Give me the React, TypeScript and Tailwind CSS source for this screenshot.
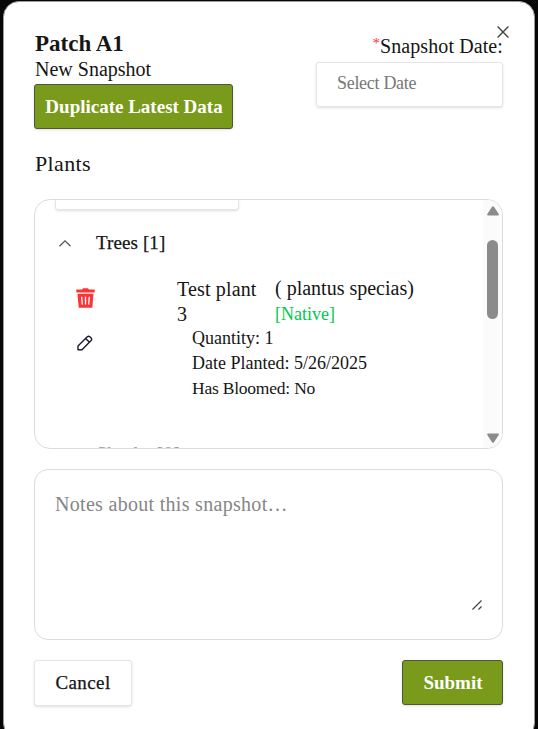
import React from "react";

function PrimaryButton({ children, className }: { children: React.ReactNode; className: string }) {
  return (
    <button
      className={`flex h-[45px] items-center justify-center rounded-[3px] border border-[#4d5540] bg-[#799a1a] pt-[2px] pl-px text-[19px] font-bold whitespace-nowrap text-white shadow-sm ${className}`}
    >
      {children}
    </button>
  );
}

function CloseIcon() {
  return (
    <svg width="12" height="12" viewBox="0 0 12 12" fill="none" stroke="#454545" strokeWidth="1.4">
      <path d="M.6.6l10.8 10.8M11.4.6L.6 11.4" />
    </svg>
  );
}

function TrashIcon() {
  return (
    <svg className="block" width="19" height="20" viewBox="0 0 19 20" fill="none">
      <path d="M.3 1.600H6L7.200.3h4.600L13 1.600h5.700V4.500H.3z" fill="#fb3535" />
      <path d="M1.500 5.700h16l-1.200 14H2.700z" fill="#fb3535" />
      <path d="M5.700 8.800l.6 7.800M9.500 8.800v7.800M13.300 8.800l-.6 7.800" stroke="#fff" strokeWidth="1.300" />
    </svg>
  );
}

function PencilIcon() {
  return (
    <svg className="block" width="16" height="16" viewBox="0 0 16 16" fill="none" stroke="#1c1b2b" strokeWidth="1.400" strokeLinejoin="round">
      <path d="M1 11L10.300 1.700Q11.600.6 12.900 1.700L14.100 2.900Q15.200 4.200 14.100 5.500L5 14.700H1zM8.600 3.400l3.900 3.900" />
    </svg>
  );
}

function Scrollbar() {
  return (
    <div className="flex w-[19px] shrink-0 flex-col items-center bg-[#fbfbfb] pt-[6px] pb-[5px]">
      <svg width="12" height="10" viewBox="0 0 12 10" fill="#8b8b8b">
        <path d="M5 .8q1-1 2 0l4.700 7.200q.6 1.500-.7 1.500H1q-1.300 0-.7-1.500z" />
      </svg>
      <div className="mt-[24px] h-[79px] w-[11px] rounded-full bg-[#8b8b8b]" />
      <svg className="mt-auto" width="12" height="10" viewBox="0 0 12 10" fill="#8b8b8b">
        <path d="M5 9.200q1 1 2 0l4.700-7.200q.6-1.500-.7-1.500H1q-1.300 0-.7 1.500z" />
      </svg>
    </div>
  );
}

export default function App() {
  return (
    <div className="h-[729px] w-[538px] overflow-hidden bg-[#070707] pt-px pl-[3px] font-['Liberation_Serif',serif] text-[#151515]">
      <div className="relative h-[738px] w-[532px] rounded-[16px] border border-[#9b9b9b] bg-white pt-[27px] pr-[31px] pl-[30px]">
        <button className="absolute top-[24px] right-[25px]" aria-label="Close">
          <CloseIcon />
        </button>

        <header className="flex h-[101px] justify-between">
          <div className="flex flex-col items-start">
            <h1 className="h-[28px] pt-px pl-px text-[23px] leading-[28px] font-bold">Patch A1</h1>
            <p className="h-[27px] pl-px text-[20px] leading-[24px]">New Snapshot</p>
            <PrimaryButton className="w-[199px]">Duplicate Latest Data</PrimaryButton>
          </div>
          <div className="flex flex-col items-end pt-[5px]">
            <label className="flex h-[28px] items-start text-[20px] leading-[25px] tracking-[0.1px] whitespace-nowrap">
              <span className="text-[14px] leading-[19px] text-[#fb2c36]">*</span>
              <span>Snapshot Date:</span>
            </label>
            <div className="flex h-[45px] w-[187px] items-center rounded-[3px] border border-[#e5e5e5] pb-[3px] pl-[20px] text-[18px] tracking-[-0.3px] text-[#777] shadow-sm">
              Select Date
            </div>
          </div>
        </header>

        <h2 className="mt-[20px] h-[48px] pl-px text-[22px] leading-[28px] tracking-[0.35px]">Plants</h2>

        <section className="mt-px flex h-[250px] w-[469px] overflow-hidden rounded-[16px] border border-[#d9dbe3]">
          <div className="flex min-w-0 flex-1 flex-col pl-[20px]">
            <div className="h-[10px] w-[184px] shrink-0 rounded-b-[3px] border border-t-0 border-[#e5e5e5] shadow-sm" />
            <div className="flex h-[66px] shrink-0 items-center">
              <svg className="ml-[4px]" width="12" height="7" viewBox="0 0 12 7" fill="none" stroke="#555" strokeWidth="1.300">
                <path d="M.5 6.300L6 .9l5.500 5.400" />
              </svg>
              <h3 className="ml-[25px] text-[19px] tracking-[0.1px] [-webkit-text-stroke:0.25px_#151515]">Trees [1]</h3>
            </div>
            <div className="flex h-[165px] shrink-0">
              <div className="flex w-[122px] shrink-0 flex-col pt-[12px] pl-[20.500px]">
                <TrashIcon />
                <div className="mt-[27px] pl-[1.500px]">
                  <PencilIcon />
                </div>
              </div>
              <div className="flex flex-col">
                <div className="flex leading-[25px]">
                  <p className="w-[98px] pt-px text-[20px] tracking-[0.15px]">
                    Test plant
                    <br />3
                  </p>
                  <p className="text-[20px] whitespace-nowrap">
                    ( plantus specias)
                    <br />
                    <span className="text-[18px] text-[#00c950]">[Native]</span>
                  </p>
                </div>
                <div className="-mt-px pl-[15px] text-[18px] leading-[25px] whitespace-nowrap">
                  <p>Quantity: 1</p>
                  <p>Date Planted: 5/26/2025</p>
                  <p className="text-[17.5px] tracking-[-0.22px]">Has Bloomed: No</p>
                </div>
              </div>
            </div>
            <p className="ml-[41px] pt-[2px] text-[20px] leading-[22px] whitespace-nowrap text-[#999]">Shrubs [0]</p>
          </div>
          <Scrollbar />
        </section>

        <section className="mt-[20px] flex h-[171px] w-[469px] flex-col justify-between rounded-[14px] border border-[#d9dbe3] px-[20px] pt-[22px] pb-[29px]">
          <p className="text-[20px] leading-[25px] tracking-[0.3px] text-[#868686]">Notes about this snapshot…</p>
          <svg className="self-end" width="10" height="10" viewBox="0 0 10 10" stroke="#444" strokeWidth="1.300">
            <path d="M.5 9.500l9-9M6.500 9.500l3-3" />
          </svg>
        </section>

        <footer className="mt-[20px] flex w-[469px] justify-between">
          <button className="flex h-[46px] w-[98px] items-center justify-center rounded-[3px] border border-[#e5e5e5] bg-white pt-px text-[19px] tracking-[0.4px] shadow-sm [-webkit-text-stroke:0.25px_#151515]">
            Cancel
          </button>
          <PrimaryButton className="w-[101px]">Submit</PrimaryButton>
        </footer>
      </div>
    </div>
  );
}
